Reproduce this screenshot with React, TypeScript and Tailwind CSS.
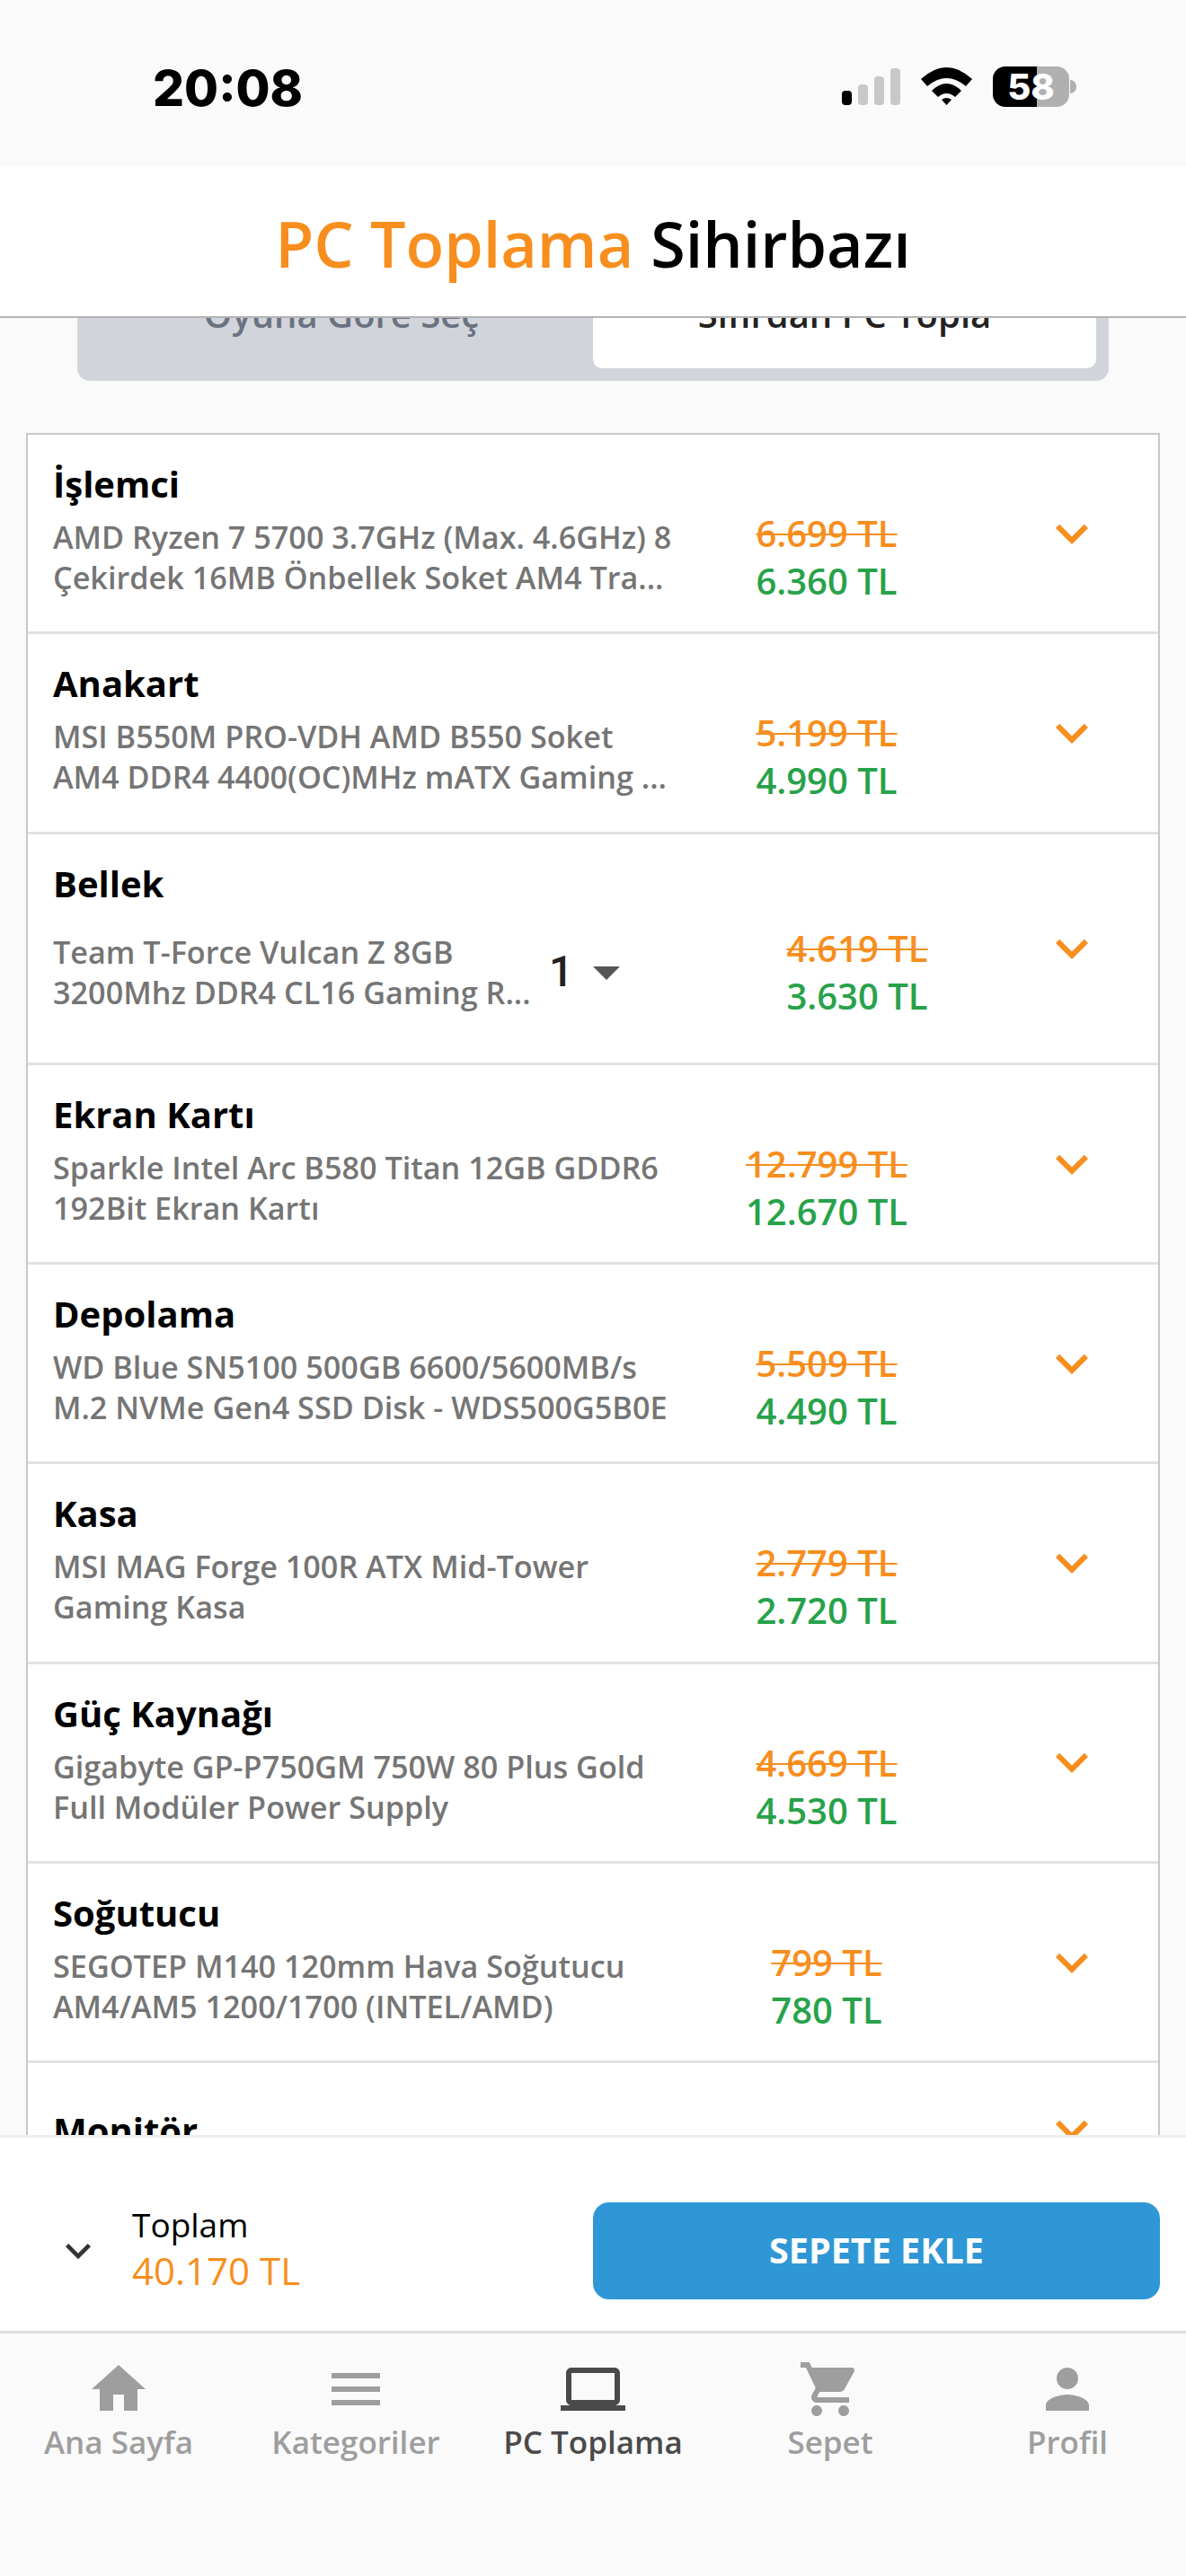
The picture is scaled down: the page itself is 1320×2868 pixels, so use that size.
import React from 'react';
import {
  MdArrowDropDown,
  MdHome,
  MdKeyboardArrowDown,
  MdLaptop,
  MdMenu,
  MdPerson,
  MdShoppingCart,
} from 'react-icons/md';

interface Part {
  title: string;
  lines: [string, string];
  oldPrice: string;
  price: string;
  qty?: number;
}

const parts: Part[] = [
  {
    title: 'İşlemci',
    lines: ['AMD Ryzen 7 5700 3.7GHz (Max. 4.6GHz) 8', 'Çekirdek 16MB Önbellek Soket AM4 Tra...'],
    oldPrice: '6.699 TL',
    price: '6.360 TL',
  },
  {
    title: 'Anakart',
    lines: ['MSI B550M PRO-VDH AMD B550 Soket', 'AM4 DDR4 4400(OC)MHz mATX Gaming ...'],
    oldPrice: '5.199 TL',
    price: '4.990 TL',
  },
  {
    title: 'Bellek',
    lines: ['Team T-Force Vulcan Z 8GB', '3200Mhz DDR4 CL16 Gaming R...'],
    oldPrice: '4.619 TL',
    price: '3.630 TL',
    qty: 1,
  },
  {
    title: 'Ekran Kartı',
    lines: ['Sparkle Intel Arc B580 Titan 12GB GDDR6', '192Bit Ekran Kartı'],
    oldPrice: '12.799 TL',
    price: '12.670 TL',
  },
  {
    title: 'Depolama',
    lines: ['WD Blue SN5100 500GB 6600/5600MB/s', 'M.2 NVMe Gen4 SSD Disk - WDS500G5B0E'],
    oldPrice: '5.509 TL',
    price: '4.490 TL',
  },
  {
    title: 'Kasa',
    lines: ['MSI MAG Forge 100R ATX Mid-Tower', 'Gaming Kasa'],
    oldPrice: '2.779 TL',
    price: '2.720 TL',
  },
  {
    title: 'Güç Kaynağı',
    lines: ['Gigabyte GP-P750GM 750W 80 Plus Gold', 'Full Modüler Power Supply'],
    oldPrice: '4.669 TL',
    price: '4.530 TL',
  },
  {
    title: 'Soğutucu',
    lines: ['SEGOTEP M140 120mm Hava Soğutucu', 'AM4/AM5 1200/1700 (INTEL/AMD)'],
    oldPrice: '799 TL',
    price: '780 TL',
  },
];

const tabs = [
  { label: 'Ana Sayfa', icon: MdHome },
  { label: 'Kategoriler', icon: MdMenu },
  { label: 'PC Toplama', icon: MdLaptop, active: true },
  { label: 'Sepet', icon: MdShoppingCart },
  { label: 'Profil', icon: MdPerson },
];

function StatusBar() {
  return (
    <div className="flex h-[186px] shrink-0 items-start bg-[#fafafa] pl-[170px] pt-[75px] font-['Inter',sans-serif]">
      <span className="w-[167px] text-[55px] leading-[46px] font-extrabold text-black">20:08</span>
      <div className="ml-[600px] mt-[1px] flex h-[41px] items-end gap-[7px]">
        <div className="h-[16px] w-[11px] rounded-[4px] bg-black" />
        <div className="h-[23px] w-[11px] rounded-[4px] bg-[#c8c8c8]" />
        <div className="h-[32px] w-[11px] rounded-[4px] bg-[#c8c8c8]" />
        <div className="h-[41px] w-[11px] rounded-[4px] bg-[#c8c8c8]" />
      </div>
      <svg className="ml-[23px]" width="57" height="42" viewBox="0 0 57 42" fill="#000">
        <path d="M0 13Q28.5-13 57 13L50 21Q28.5 3 7 21Z" />
        <path d="M12 26Q28.5 10 45 26L38 33Q28.5 25 19 33Z" />
        <path d="M23 36Q28.5 32 34 36L28.5 42Z" />
      </svg>
      <div className="ml-[23px] -mt-[1px] flex h-[45px] w-[85px] items-center justify-center rounded-[14px] bg-[linear-gradient(90deg,#000_58%,#b0b0b0_58%)] text-[40px] font-extrabold text-white">
        58
      </div>
      <div className="ml-[1px] mt-[14px] h-[15px] w-[7px] rounded-r-full bg-[#b0b0b0]" />
    </div>
  );
}

function PartRow({ part }: { part: Part }) {
  return (
    <div className="flex items-center border-b-[3px] border-[#e2e2e2] pl-[28px]">
      <div className="min-w-0 flex-1 pt-[27px] pb-[30.3px]">
        <div className="text-[40px] leading-[56px] font-bold text-black">{part.title}</div>
        <div className={part.qty ? 'flex items-center h-[141px]' : 'flex items-center h-[106px]'}>
          <div className="min-w-0 flex-1 whitespace-nowrap text-[34.2px] leading-[45px] font-[650] text-[#757575]">
            <div>{part.lines[0]}</div>
            <div>{part.lines[1]}</div>
          </div>
          {part.qty ? (
            <div className="flex w-[265px] items-center font-['Roboto',sans-serif] text-[48px] font-medium text-[#222222]">
              <span>{part.qty}</span>
              <MdArrowDropDown size={72} className="ml-[1px] text-[#555555]" />
            </div>
          ) : null}
          <div
            className={
              part.qty
                ? 'mr-[63px] flex w-[156px] shrink-0 flex-col items-center text-[40px] leading-[53px] font-[650]'
                : 'mr-[72px] flex w-[206px] shrink-0 flex-col items-center text-[40px] leading-[53px] font-[650]'
            }
          >
            <span className="whitespace-nowrap text-[#f78e1e] line-through decoration-[2px]">{part.oldPrice}</span>
            <span className="whitespace-nowrap text-[#27a24a]">{part.price}</span>
          </div>
        </div>
      </div>
      <MdKeyboardArrowDown size={72} className="ml-[62px] mr-[60px] shrink-0 text-[#f78e1e]" />
    </div>
  );
}

export default function App() {
  return (
    <div className="flex h-[2868px] w-[1320px] flex-col overflow-hidden bg-[#fafafa] font-['Open_Sans',sans-serif]">
      <StatusBar />
      <header className="flex h-[168px] shrink-0 items-center justify-center border-b-2 border-[#b4b4b4] bg-white pt-[4px] text-[70px] leading-none font-[650]">
        <span className="text-[#f78e1e]">PC Toplama</span>
        <span className="ml-[19px] text-black">Sihirbazı</span>
      </header>

      <main className="min-h-0 flex-1 overflow-hidden">
        <div className="mx-[86px] -mt-[56px] flex h-[126px] rounded-b-[14px] bg-[#d1d5db] px-[14px] pb-[14px] text-[40px] font-[650]">
          <div className="flex flex-1 items-end justify-center pb-[30px] text-[#6b7280]">Oyuna Göre Seç</div>
          <div className="flex flex-1 items-end justify-center rounded-b-[10px] bg-white pb-[30px] text-[#222222]">
            Sıfırdan PC Topla
          </div>
        </div>
        <div className="mx-[29px] mt-[58px] border-x-2 border-t-2 border-[#c8c8c8] bg-white">
          {parts.map((part) => (
            <PartRow key={part.title} part={part} />
          ))}
          <div className="flex items-start pl-[28px] pt-[47px]">
            <div className="flex-1 text-[40px] leading-[55px] font-bold text-black">Monitör</div>
            <MdKeyboardArrowDown size={72} className="ml-[62px] mr-[60px] -mt-[9px] shrink-0 text-[#f78e1e]" />
          </div>
        </div>
      </main>

      <div className="flex h-[221px] shrink-0 items-center border-y-[3px] border-t-[#eeeeee] border-b-[#dddddd] bg-white pl-[59px] pr-[29px] pt-[36px]">
        <MdKeyboardArrowDown size={56} className="text-[#333333]" />
        <div className="mb-[6px] ml-[32px] flex-1">
          <div className="text-[37px] leading-[50px] text-black">Toplam</div>
          <div className="text-[42px] leading-[52px] text-[#f78e1e]">40.170 TL</div>
        </div>
        <button className="h-[108px] w-[631px] rounded-[18px] bg-[#2f97d5] text-[39.5px] font-bold text-white">
          SEPETE EKLE
        </button>
      </div>

      <nav className="grid h-[270px] shrink-0 grid-cols-5 pt-[26px]">
        {tabs.map((tab) => {
          const Icon = tab.icon;
          return (
            <div
              key={tab.label}
              className={
                tab.active
                  ? 'flex flex-col items-center text-[#4a4a4a]'
                  : 'flex flex-col items-center text-[#9e9e9e]'
              }
            >
              <Icon size={72} />
              <span className="text-[35px] leading-[46px] font-[650]">{tab.label}</span>
            </div>
          );
        })}
      </nav>
    </div>
  );
}
